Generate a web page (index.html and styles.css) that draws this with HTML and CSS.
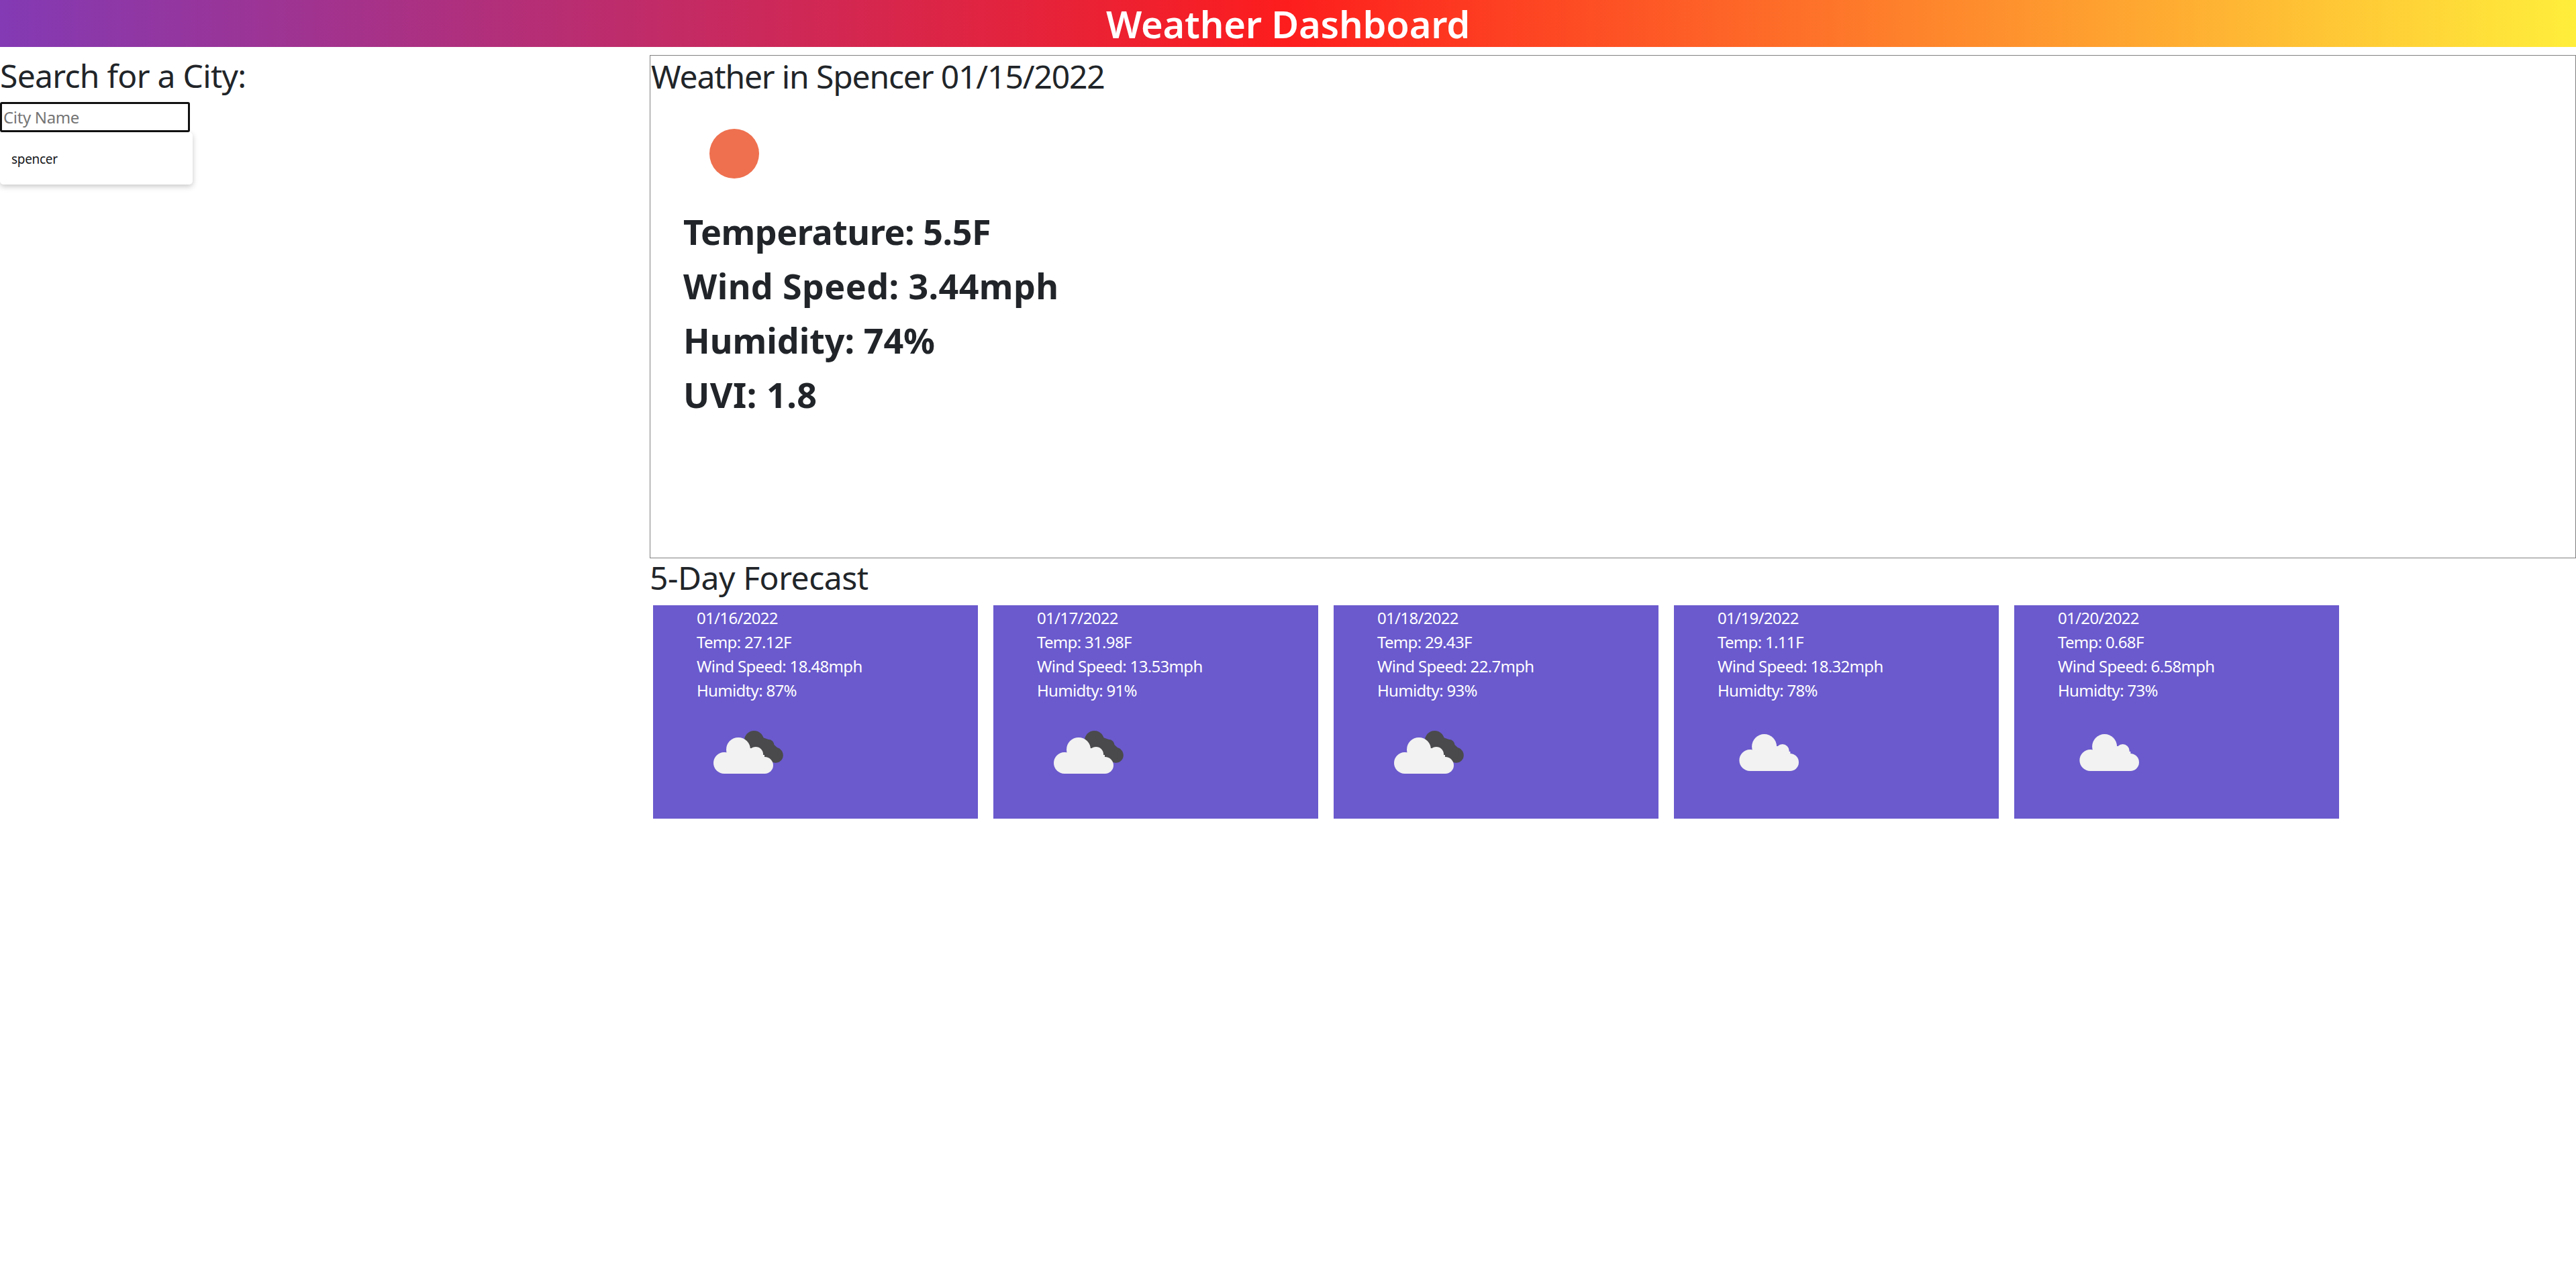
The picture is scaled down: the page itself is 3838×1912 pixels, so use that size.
FILE: index.html
```html
<!DOCTYPE html>
<html lang="en">
<head>
<meta charset="utf-8">
<title>Weather Dashboard</title>
<link rel="stylesheet" href="styles.css">
</head>
<body>
<svg class="defs" width="0" height="0" aria-hidden="true">
  <defs>
    <g id="cloud-single">
      <circle cx="67.6" cy="32.5" r="18.5"/>
      <circle cx="46.4" cy="53" r="16"/>
      <circle cx="94.7" cy="39" r="10"/>
      <circle cx="106" cy="56" r="13"/>
      <rect x="46.4" y="40" width="60" height="29"/>
      <rect x="67" y="32" width="28" height="14"/>
    </g>
    <g id="cloud-double">
      <g fill="#4a4a4c">
        <circle cx="83.5" cy="23.6" r="14.6"/>
        <circle cx="105" cy="30.5" r="8.5"/>
        <circle cx="115.5" cy="45.4" r="11.3"/>
        <path d="M85 15 L105 22 L120 36 L116 56.5 L90 50 Z"/>
      </g>
      <g fill="#f2f2f2">
        <circle cx="60" cy="37" r="18"/>
        <circle cx="39" cy="57" r="16"/>
        <circle cx="86" cy="44" r="11"/>
        <circle cx="99.5" cy="60.5" r="12.5"/>
        <rect x="39" y="45" width="60" height="28"/>
        <rect x="60" y="35" width="26" height="14"/>
      </g>
    </g>
  </defs>
</svg>
<header class="banner"><h1 class="banner-title">Weather Dashboard</h1></header>
<div class="layout">
  <aside class="search">
    <h2 class="heading heading-search">Search for a City:</h2>
    <input class="city-input" type="text" placeholder="City Name">
    <ul class="suggestions"><li class="suggestion">spencer</li></ul>
  </aside>
  <main class="content">
    <section class="current">
      <h2 class="heading heading-current">Weather in Spencer 01/15/2022</h2>
      <div class="sun"></div>
      <p class="stat stat-temp">Temperature: 5.5F</p>
      <p class="stat stat-wind">Wind Speed: 3.44mph</p>
      <p class="stat">Humidity: 74%</p>
      <p class="stat stat-uvi">UVI: 1.8</p>
    </section>
    <h2 class="heading heading-forecast">5-Day Forecast</h2>
    <div class="forecast">
      <article class="card">
        <p>01/16/2022</p><p>Temp: 27.12F</p><p>Wind Speed: 18.48mph</p><p>Humidty: 87%</p>
        <svg class="icon" viewBox="0 0 140 90"><use href="#cloud-double"/></svg>
      </article>
      <article class="card">
        <p>01/17/2022</p><p>Temp: 31.98F</p><p>Wind Speed: 13.53mph</p><p>Humidty: 91%</p>
        <svg class="icon" viewBox="0 0 140 90"><use href="#cloud-double"/></svg>
      </article>
      <article class="card">
        <p>01/18/2022</p><p>Temp: 29.43F</p><p>Wind Speed: 22.7mph</p><p>Humidty: 93%</p>
        <svg class="icon" viewBox="0 0 140 90"><use href="#cloud-double"/></svg>
      </article>
      <article class="card">
        <p>01/19/2022</p><p>Temp: 1.11F</p><p>Wind Speed: 18.32mph</p><p>Humidty: 78%</p>
        <svg class="icon icon-light" viewBox="0 0 140 90"><use href="#cloud-single"/></svg>
      </article>
      <article class="card">
        <p>01/20/2022</p><p>Temp: 0.68F</p><p>Wind Speed: 6.58mph</p><p>Humidty: 73%</p>
        <svg class="icon icon-light" viewBox="0 0 140 90"><use href="#cloud-single"/></svg>
      </article>
    </div>
  </main>
</div>
</body>
</html>
```
FILE: styles.css
```css
* { box-sizing: border-box; }
html, body { margin: 0; padding: 0; }
body {
  background: #fff;
  color: #212529;
  font-family: "Noto Sans", "Open Sans", sans-serif;
  min-height: 1912px;
}
.defs { position: absolute; }
.banner {
  height: 70px;
  display: flex;
  align-items: center;
  justify-content: center;
  background: linear-gradient(to right, #833ab4 0%, #fd1d1d 50%, #ffee3b 100%);
}
.banner-title {
  margin: 0;
  color: #fff;
  font-size: 56px;
  font-weight: 600;
  line-height: 70px;
  letter-spacing: -0.2px;
}
.layout { display: flex; align-items: flex-start; }
.search { width: 968px; flex: none; padding-top: 14px; }
.heading { margin: 0; font-size: 48px; font-weight: 400; line-height: 58px; }
.heading-search { letter-spacing: -0.7px; }
.heading-current { padding: 2px 0 0 1px; letter-spacing: -1.15px; }
.heading-forecast { letter-spacing: -0.45px; margin-bottom: 12px; }
.city-input {
  display: block;
  width: 283px;
  height: 45px;
  margin: 10px 0 0;
  padding: 0 2px;
  border: 3px solid #111;
  border-radius: 3px;
  outline: none;
  background: #fff;
  font: 24px "Noto Sans", "Open Sans", sans-serif;
  letter-spacing: -0.35px;
}
.city-input::placeholder { color: #757575; opacity: 1; }
.suggestions {
  list-style: none;
  width: 287px;
  height: 78px;
  margin: 0;
  padding: 2px 0 0 17px;
  display: flex;
  align-items: center;
  border-radius: 5px;
  background: #fff;
  box-shadow: 0 3px 8px rgba(0, 0, 0, 0.22);
}
.suggestion { font-size: 19px; letter-spacing: -0.3px; color: #15171a; }
.content { flex: 1; min-width: 0; margin-top: 12px; }
.current { height: 750px; border: 1px solid #808080; }
.sun {
  width: 74px;
  height: 74px;
  margin: 49px 0 0 88px;
  border-radius: 50%;
  background: #ee704f;
}
.sun + .stat { margin-top: 45px; }
.stat {
  margin: 0 0 14px 49px;
  font-size: 52px;
  font-weight: 700;
  line-height: 67px;
  letter-spacing: 0;
}
.stat-temp { letter-spacing: -0.45px; }
.stat-wind { letter-spacing: 0.4px; }
.stat-uvi { letter-spacing: 0.5px; }
.forecast { display: flex; gap: 23px; padding-left: 5px; }
.card {
  width: 484px;
  height: 318px;
  flex: none;
  padding: 1px 0 0 65px;
  background: #6a5acd;
  color: #fff;
  font-size: 24px;
  line-height: 36px;
  letter-spacing: -0.68px;
}
.card p { margin: 0; }
.icon { display: block; width: 140px; height: 90px; margin: 33px 0 0 2px; }
.icon-light { fill: #f2f2f2; }
```
